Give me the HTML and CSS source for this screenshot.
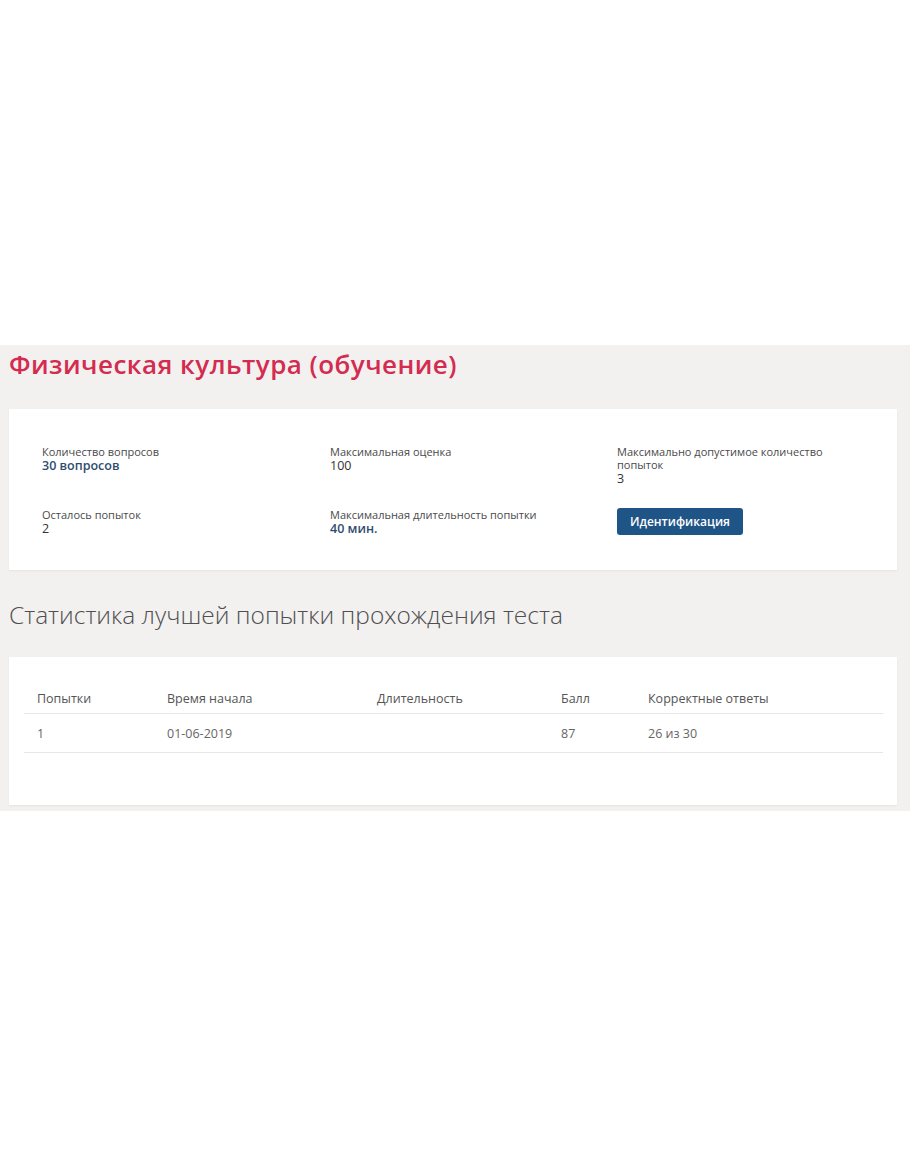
FILE: index.html
```html
<!DOCTYPE html>
<html lang="ru">
<head>
<meta charset="utf-8">
<title>Физическая культура (обучение)</title>
<link rel="stylesheet" href="styles.css">
</head>
<body>
<div class="top-space"></div>
<main class="band">
  <h1 class="title">Физическая культура (обучение)</h1>
  <section class="card info">
    <div class="info-grid">
      <div class="field">
        <div class="label">Количество вопросов</div>
        <div class="value accent">30 вопросов</div>
      </div>
      <div class="field">
        <div class="label">Максимальная оценка</div>
        <div class="value">100</div>
      </div>
      <div class="field">
        <div class="label">Максимально допустимое количество попыток</div>
        <div class="value">3</div>
      </div>
      <div class="field">
        <div class="label">Осталось попыток</div>
        <div class="value">2</div>
      </div>
      <div class="field">
        <div class="label">Максимальная длительность попытки</div>
        <div class="value accent">40 мин.</div>
      </div>
      <div class="field">
        <button class="btn" type="button">Идентификация</button>
      </div>
    </div>
  </section>
  <h2 class="subtitle">Статистика лучшей попытки прохождения теста</h2>
  <section class="card stats">
    <table class="table">
      <thead>
        <tr>
          <th class="c1">Попытки</th>
          <th class="c2">Время начала</th>
          <th class="c3">Длительность</th>
          <th class="c4">Балл</th>
          <th class="c5">Корректные ответы</th>
        </tr>
      </thead>
      <tbody>
        <tr>
          <td>1</td>
          <td>01-06-2019</td>
          <td></td>
          <td>87</td>
          <td>26 из 30</td>
        </tr>
      </tbody>
    </table>
  </section>
</main>
</body>
</html>
```

FILE: styles.css
```css
html, body {
  margin: 0;
  padding: 0;
  background: #ffffff;
}

body {
  font-family: "Open Sans", "Noto Sans", sans-serif;
  color: #444;
}

.top-space {
  height: 345px;
}

.band {
  background: #f2f1ef;
  padding: 1px 13px 5px 9px;
  box-sizing: border-box;
  height: 466px;
}

.title {
  margin: 0;
  font-size: 26px;
  line-height: 36px;
  font-weight: 600;
  color: #d42b50;
  letter-spacing: 0.45px;
}

.card {
  background: #fff;
  box-shadow: 0 1px 2px rgba(0, 0, 0, 0.06);
}

.info {
  margin-top: 27px;
  height: 161px;
  box-sizing: border-box;
  padding: 36px 20px 0 33px;
}

.info-grid {
  display: grid;
  grid-template-columns: 288px 287px 240px;
  row-gap: 13px;
}

.field {
  min-height: 50px;
}

.label {
  font-size: 11px;
  line-height: 13px;
  color: #4a4a4a;
}

.value {
  font-size: 12.5px;
  line-height: 16px;
  color: #333;
}

.value.accent {
  color: #2d4d70;
  font-weight: 600;
}

.btn {
  display: block;
  margin-top: 0;
  height: 27px;
  padding: 0 13px;
  border: none;
  border-radius: 3px;
  background: #1f5487;
  color: #fff;
  font-family: "Open Sans", "Noto Sans", sans-serif;
  font-size: 12px;
  font-weight: 600;
  cursor: pointer;
}

.subtitle {
  margin: 30px 0 0;
  font-size: 24.5px;
  line-height: 30px;
  font-weight: 300;
  color: #4f4f4f;
  letter-spacing: 0;
}

.stats {
  margin-top: 27px;
  height: 148px;
  box-sizing: border-box;
  padding: 27px 14px 0 15px;
}

.table {
  width: 100%;
  border-collapse: collapse;
  font-size: 12.5px;
  color: #555;
}

.table th {
  text-align: left;
  font-weight: 400;
  color: #555;
  height: 29px;
  padding: 0 0 0 13px;
  border-bottom: 1px solid #e6e6e6;
}

.table td {
  text-align: left;
  height: 38px;
  padding: 0 0 0 13px;
  border-bottom: 1px solid #e6e6e6;
  color: #666;
}

.c1 { width: 117px; }
.c2 { width: 197px; }
.c3 { width: 171px; }
.c4 { width: 74px; }
```
